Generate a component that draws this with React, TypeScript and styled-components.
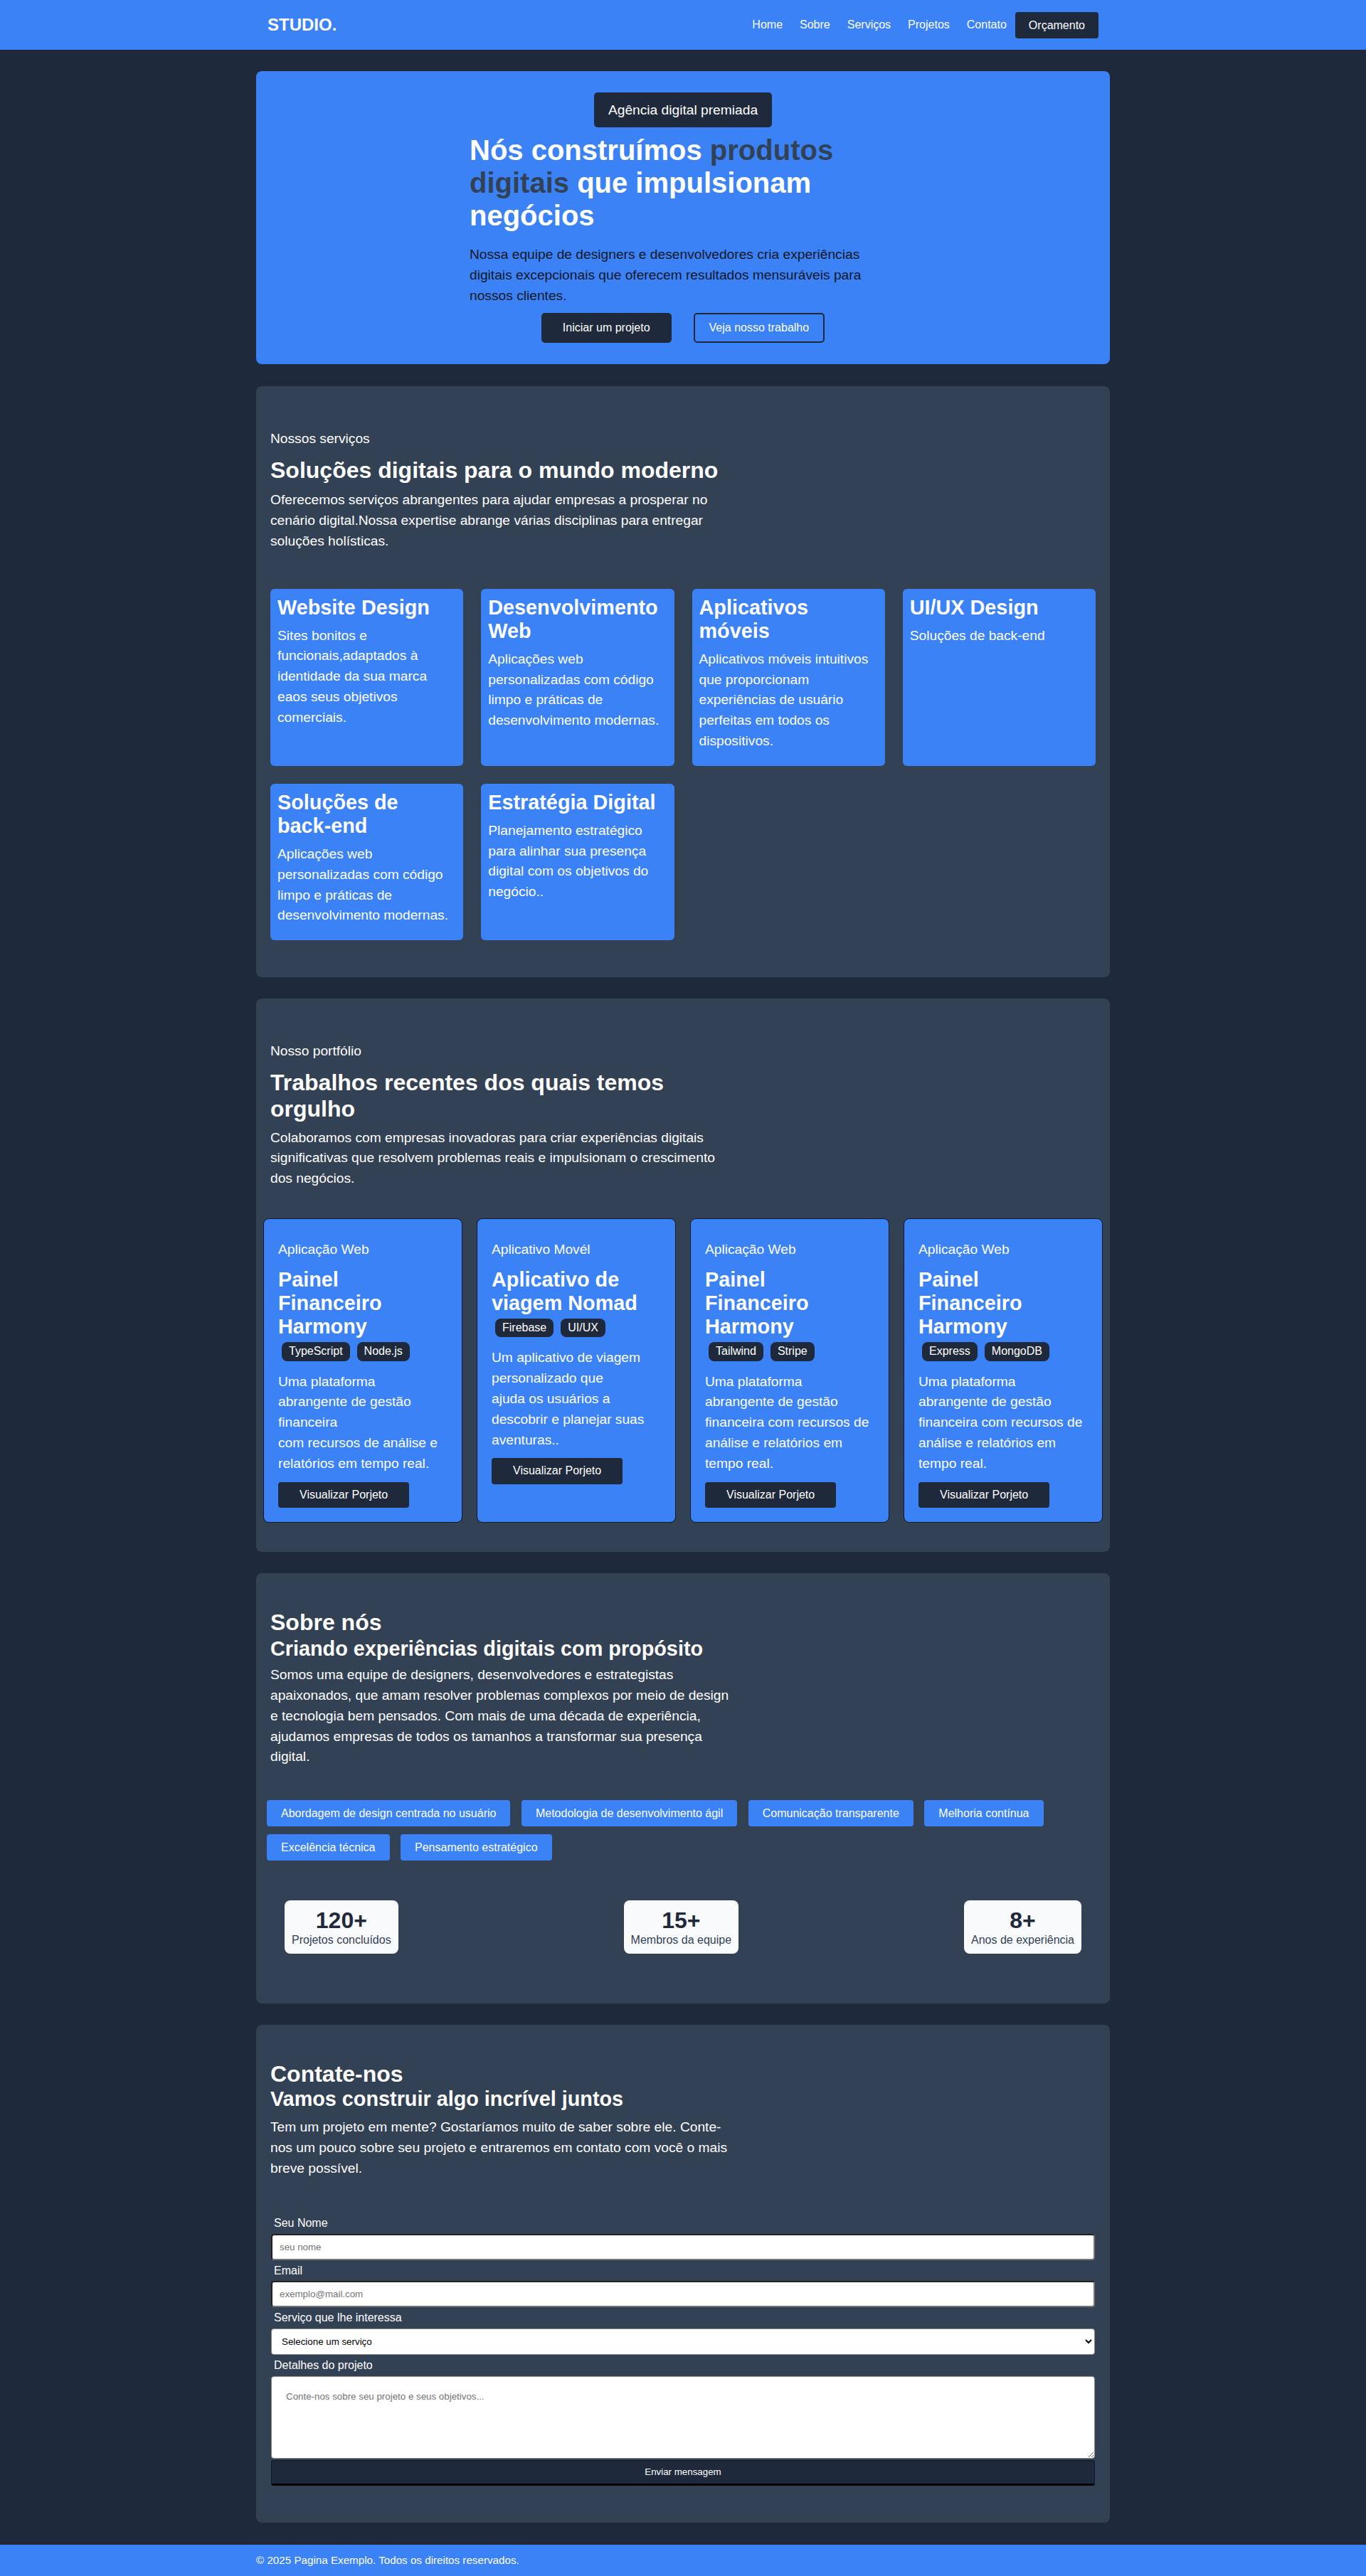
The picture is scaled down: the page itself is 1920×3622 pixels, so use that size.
import React from "react";
import styled, { createGlobalStyle } from "styled-components";

const GlobalStyle = createGlobalStyle`
  * { box-sizing: border-box; }
  html, body { margin: 0; padding: 0; }
  body {
    background: #1e293b;
    color: #ffffff;
    font-family: "Liberation Sans", Arial, Helvetica, sans-serif;
  }
`;

/* ---------- Header ---------- */
const Header = styled.header`
  background: #3b82f6;
  height: 70px;
`;
const HeaderInner = styled.div`
  max-width: 1200px;
  height: 100%;
  margin: 0 auto;
  padding: 0 16px;
  display: flex;
  align-items: center;
  justify-content: space-between;
`;
const Logo = styled.div`
  font-size: 24px;
  font-weight: 700;
  color: #ffffff;
`;
const Nav = styled.nav`
  display: flex;
  align-items: center;
`;
const NavLink = styled.a`
  color: #ffffff;
  text-decoration: none;
  font-size: 16px;
  line-height: 18.4px;
  padding: 8px 12px;
`;
const NavCta = styled.a`
  color: #ffffff;
  background: #1e293b;
  text-decoration: none;
  font-size: 16px;
  line-height: 19px;
  padding: 9px 19px;
  border-radius: 4px;
`;

/* ---------- Layout ---------- */
const Main = styled.main`
  max-width: 1200px;
  margin: 0 auto;
  padding: 30px 0 30.7px;
  display: flex;
  flex-direction: column;
  gap: 30.6px;
`;

/* ---------- Hero ---------- */
const Hero = styled.section`
  background: #3b82f6;
  border-radius: 8px;
  padding: 30px;
  display: flex;
  flex-direction: column;
  align-items: center;
`;
const Badge = styled.div`
  background: #1e293b;
  color: #ffffff;
  font-size: 19.2px;
  line-height: 23px;
  padding: 13px 20px;
  border-radius: 5px;
`;
const HeroContent = styled.div`
  width: 600px;
`;
const HeroTitle = styled.h1`
  font-size: 40px;
  line-height: 46px;
  font-weight: 700;
  color: #ffffff;
  margin: 9px 0 18px;
`;
const Highlight = styled.span`
  color: #334155;
`;
const HeroText = styled.p`
  font-size: 19.2px;
  line-height: 28.8px;
  color: #111827;
  margin: 0;
`;
const HeroActions = styled.div`
  display: flex;
  gap: 31px;
  margin-top: 10px;
`;
const HeroButton = styled.button<{ $outline?: boolean }>`
  font-family: inherit;
  font-size: 16px;
  line-height: 18px;
  color: #ffffff;
  cursor: pointer;
  border-radius: 5px;
  background: ${(p) => (p.$outline ? "transparent" : "#1e293b")};
  border: ${(p) => (p.$outline ? "2px solid #1e293b" : "none")};
  padding: ${(p) => (p.$outline ? "10px 20px" : "12px 30px")};
`;

/* ---------- Generic section ---------- */
const Section = styled.section<{ $pt: number; $pb: number }>`
  background: #334155;
  border-radius: 8px;
  padding: ${(p) => p.$pt}px 20px ${(p) => p.$pb}px;
`;
const Eyebrow = styled.p`
  font-size: 19.2px;
  line-height: 28.8px;
  color: #ffffff;
  margin: 0;
`;
const SectionTitle = styled.h2<{ $mt?: number }>`
  font-size: 32px;
  line-height: 36.8px;
  font-weight: 700;
  color: #ffffff;
  max-width: 650px;
  margin: ${(p) => p.$mt ?? 0}px 0 0;
`;
const SectionSubtitle = styled.h3<{ $mt?: number }>`
  font-size: 28.8px;
  line-height: 33.1px;
  font-weight: 700;
  color: #ffffff;
  margin: ${(p) => p.$mt ?? 0}px 0 0;
`;
const SectionText = styled.p<{ $mt: number }>`
  font-size: 19.2px;
  line-height: 28.8px;
  color: #ffffff;
  max-width: 650px;
  margin: ${(p) => p.$mt}px 0 0;
`;

/* ---------- Services ---------- */
const ServiceGrid = styled.div`
  display: grid;
  grid-template-columns: repeat(4, 1fr);
  gap: 25px;
  margin-top: 52px;
`;
const ServiceCard = styled.div`
  background: #3b82f6;
  border-radius: 6px;
  padding: 10px 10px 20px;
`;
const ServiceTitle = styled.h3`
  font-size: 28.8px;
  line-height: 33.1px;
  font-weight: 700;
  color: #ffffff;
  margin: 0 0 9px;
`;
const ServiceText = styled.p`
  font-size: 19.2px;
  line-height: 28.8px;
  color: #ffffff;
  margin: 0;
`;

/* ---------- Portfolio ---------- */
const ProjectGrid = styled.div`
  display: grid;
  grid-template-columns: repeat(4, 1fr);
  gap: 20px;
  margin: 41px -10px 0;
`;
const ProjectCard = styled.article`
  background: #3b82f6;
  border: 1px solid #0f172a;
  border-radius: 8px;
  padding: 20px;
  display: flex;
  flex-direction: column;
  align-items: flex-start;
`;
const ProjectType = styled.p`
  font-size: 19.2px;
  line-height: 28.8px;
  color: #ffffff;
  margin: 9px 0 0;
`;
const ProjectTitle = styled.h3`
  font-size: 28.8px;
  line-height: 33.1px;
  font-weight: 700;
  color: #ffffff;
  margin: 11px 0 0;
`;
const TagList = styled.div`
  display: flex;
  flex-wrap: wrap;
`;
const Tag = styled.span`
  background: #1e293b;
  color: #ffffff;
  font-size: 16px;
  line-height: 18.4px;
  padding: 4px 10px;
  border-radius: 8px;
  margin: 5px;
`;
const ProjectText = styled.p`
  font-size: 19.2px;
  line-height: 28.8px;
  color: #ffffff;
  margin: 10px 0 0;
`;
const ProjectButton = styled.button`
  font-family: inherit;
  font-size: 16px;
  line-height: 18.4px;
  color: #ffffff;
  background: #1e293b;
  border: none;
  border-radius: 4px;
  padding: 9px 30px;
  margin-top: 11px;
  cursor: pointer;
`;

/* ---------- About ---------- */
const PillList = styled.div`
  display: flex;
  flex-wrap: wrap;
  gap: 11px 15.5px;
  margin: 46px -5px 0;
`;
const Pill = styled.span`
  background: #3b82f6;
  color: #ffffff;
  font-size: 16px;
  line-height: 19px;
  padding: 9px 20px;
  border-radius: 4px;
`;
const StatsRow = styled.div`
  display: flex;
  justify-content: space-between;
  padding: 0 20px;
  margin-top: 56px;
`;
const StatCard = styled.div`
  background: #f8fafc;
  border-radius: 8px;
  padding: 10px;
  text-align: center;
`;
const StatNumber = styled.div`
  font-size: 32px;
  line-height: 36.8px;
  font-weight: 700;
  color: #1e293b;
`;
const StatLabel = styled.div`
  font-size: 16px;
  line-height: 18.4px;
  color: #334155;
`;

/* ---------- Contact ---------- */
const Form = styled.form`
  display: flex;
  flex-direction: column;
  margin: 54px 1px 0;
`;
const FieldLabel = styled.label`
  font-size: 16px;
  line-height: 18.4px;
  color: #ffffff;
  padding-left: 4px;
  margin-bottom: 5px;
`;
const TextInput = styled.input`
  height: 37px;
  padding: 0 10px;
  font-family: inherit;
  font-size: 13.33px;
  color: #000000;
  background: #ffffff;
  border: 2px inset #767676;
  border-radius: 4px;
  margin-bottom: 6px;
`;
const SelectInput = styled.select`
  height: 37.6px;
  padding: 0 10px;
  font-family: inherit;
  font-size: 13.33px;
  color: #000000;
  background: #ffffff;
  border: 1px solid #8a8a8a;
  border-radius: 4px;
  margin-bottom: 6px;
`;
const TextArea = styled.textarea`
  height: 116px;
  padding: 20px;
  font-family: inherit;
  font-size: 13.33px;
  color: #000000;
  background: #ffffff;
  border: 1px solid #8a8a8a;
  border-radius: 4px;
  resize: vertical;
  margin-bottom: 2px;
`;
const SubmitButton = styled.button`
  height: 36.4px;
  font-family: inherit;
  font-size: 13.33px;
  color: #ffffff;
  background: #1e293b;
  border: 1px solid #0f172a;
  border-bottom: 3px solid #000000;
  border-radius: 3px;
  cursor: pointer;
`;

/* ---------- Footer ---------- */
const Footer = styled.footer`
  background: #3b82f6;
  height: 44px;
`;
const FooterInner = styled.div`
  max-width: 1200px;
  height: 100%;
  margin: 0 auto;
  display: flex;
  align-items: center;
  font-size: 15.2px;
  color: #ffffff;
`;

/* ---------- Data ---------- */
const services = [
  {
    title: "Website Design",
    text: "Sites bonitos e funcionais,adaptados à identidade da sua marca eaos seus objetivos comerciais.",
  },
  {
    title: "Desenvolvimento Web",
    text: "Aplicações web personalizadas com código limpo e práticas de desenvolvimento modernas.",
  },
  {
    title: "Aplicativos móveis",
    text: "Aplicativos móveis intuitivos que proporcionam experiências de usuário perfeitas em todos os dispositivos.",
  },
  { title: "UI/UX Design", text: "Soluções de back-end" },
  {
    title: "Soluções de back-end",
    text: "Aplicações web personalizadas com código limpo e práticas de desenvolvimento modernas.",
  },
  {
    title: "Estratégia Digital",
    text: "Planejamento estratégico para alinhar sua presença digital com os objetivos do negócio..",
  },
];

const projects: {
  type: string;
  title: string;
  tags: string[];
  text: React.ReactNode;
}[] = [
  {
    type: "Aplicação Web",
    title: "Painel Financeiro Harmony",
    tags: ["TypeScript", "Node.js"],
    text: (
      <>
        Uma plataforma abrangente de gestão financeira
        <br />
        com recursos de análise e relatórios em tempo real.
      </>
    ),
  },
  {
    type: "Aplicativo Movél",
    title: "Aplicativo de viagem Nomad",
    tags: ["Firebase", "UI/UX"],
    text: (
      <>
        Um aplicativo de viagem personalizado que
        <br />
        ajuda os usuários a descobrir e planejar suas aventuras..
      </>
    ),
  },
  {
    type: "Aplicação Web",
    title: "Painel Financeiro Harmony",
    tags: ["Tailwind", "Stripe"],
    text: "Uma plataforma abrangente de gestão financeira com recursos de análise e relatórios em tempo real.",
  },
  {
    type: "Aplicação Web",
    title: "Painel Financeiro Harmony",
    tags: ["Express", "MongoDB"],
    text: "Uma plataforma abrangente de gestão financeira com recursos de análise e relatórios em tempo real.",
  },
];

const values = [
  "Abordagem de design centrada no usuário",
  "Metodologia de desenvolvimento ágil",
  "Comunicação transparente",
  "Melhoria contínua",
  "Excelência técnica",
  "Pensamento estratégico",
];

const stats = [
  { value: "120+", label: "Projetos concluídos" },
  { value: "15+", label: "Membros da equipe" },
  { value: "8+", label: "Anos de experiência" },
];

export default function App() {
  return (
    <>
      <GlobalStyle />
      <Header>
        <HeaderInner>
          <Logo>STUDIO.</Logo>
          <Nav>
            <NavLink href="#">Home</NavLink>
            <NavLink href="#">Sobre</NavLink>
            <NavLink href="#">Serviços</NavLink>
            <NavLink href="#">Projetos</NavLink>
            <NavLink href="#">Contato</NavLink>
            <NavCta href="#">Orçamento</NavCta>
          </Nav>
        </HeaderInner>
      </Header>

      <Main>
        <Hero>
          <Badge>Agência digital premiada</Badge>
          <HeroContent>
            <HeroTitle>
              Nós construímos <Highlight>produtos</Highlight>{" "}
              <Highlight>digitais</Highlight> que impulsionam negócios
            </HeroTitle>
            <HeroText>
              Nossa equipe de designers e desenvolvedores cria experiências
              digitais excepcionais que oferecem resultados mensuráveis para
              nossos clientes.
            </HeroText>
          </HeroContent>
          <HeroActions>
            <HeroButton>Iniciar um projeto</HeroButton>
            <HeroButton $outline>Veja nosso trabalho</HeroButton>
          </HeroActions>
        </Hero>

        <Section $pt={60.4} $pb={51.6}>
          <Eyebrow>Nossos serviços</Eyebrow>
          <SectionTitle $mt={11}>Soluções digitais para o mundo moderno</SectionTitle>
          <SectionText $mt={9.2}>
            Oferecemos serviços abrangentes para ajudar empresas a prosperar no
            cenário digital.Nossa expertise abrange várias disciplinas para
            entregar soluções holísticas.
          </SectionText>
          <ServiceGrid>
            {services.map((s, i) => (
              <ServiceCard key={i}>
                <ServiceTitle>{s.title}</ServiceTitle>
                <ServiceText>{s.text}</ServiceText>
              </ServiceCard>
            ))}
          </ServiceGrid>
        </Section>

        <Section $pt={60} $pb={40.7}>
          <Eyebrow>Nosso portfólio</Eyebrow>
          <SectionTitle $mt={11}>Trabalhos recentes dos quais temos orgulho</SectionTitle>
          <SectionText $mt={8}>
            Colaboramos com empresas inovadoras para criar experiências digitais
            significativas que resolvem problemas reais e impulsionam o
            crescimento dos negócios.
          </SectionText>
          <ProjectGrid>
            {projects.map((p, i) => (
              <ProjectCard key={i}>
                <ProjectType>{p.type}</ProjectType>
                <ProjectTitle>{p.title}</ProjectTitle>
                <TagList>
                  {p.tags.map((t) => (
                    <Tag key={t}>{t}</Tag>
                  ))}
                </TagList>
                <ProjectText>{p.text}</ProjectText>
                <ProjectButton>Visualizar Porjeto</ProjectButton>
              </ProjectCard>
            ))}
          </ProjectGrid>
        </Section>

        <Section $pt={51} $pb={69.3}>
          <SectionTitle>Sobre nós</SectionTitle>
          <SectionSubtitle $mt={2}>Criando experiências digitais com propósito</SectionSubtitle>
          <SectionText $mt={6}>
            Somos uma equipe de designers, desenvolvedores e estrategistas
            apaixonados, que amam resolver problemas complexos por meio de design
            e tecnologia bem pensados. Com mais de uma década de experiência,
            ajudamos empresas de todos os tamanhos a transformar sua presença
            digital.
          </SectionText>
          <PillList>
            {values.map((v) => (
              <Pill key={v}>{v}</Pill>
            ))}
          </PillList>
          <StatsRow>
            {stats.map((s) => (
              <StatCard key={s.label}>
                <StatNumber>{s.value}</StatNumber>
                <StatLabel>{s.label}</StatLabel>
              </StatCard>
            ))}
          </StatsRow>
        </Section>

        <Section $pt={51} $pb={52}>
          <SectionTitle>Contate-nos</SectionTitle>
          <SectionSubtitle>Vamos construir algo incrível juntos</SectionSubtitle>
          <SectionText $mt={9}>
            Tem um projeto em mente? Gostaríamos muito de saber sobre ele.
            Conte-nos um pouco sobre seu projeto e entraremos em contato com você
            o mais breve possível.
          </SectionText>
          <Form onSubmit={(e) => e.preventDefault()}>
            <FieldLabel htmlFor="nome">Seu Nome</FieldLabel>
            <TextInput id="nome" type="text" placeholder="seu nome" />
            <FieldLabel htmlFor="email">Email</FieldLabel>
            <TextInput id="email" type="email" placeholder="exemplo@mail.com" />
            <FieldLabel htmlFor="servico">Serviço que lhe interessa</FieldLabel>
            <SelectInput id="servico" defaultValue="">
              <option value="">Selecione um serviço</option>
              <option value="web">Website Design</option>
              <option value="dev">Desenvolvimento Web</option>
              <option value="app">Aplicativos móveis</option>
            </SelectInput>
            <FieldLabel htmlFor="detalhes">Detalhes do projeto</FieldLabel>
            <TextArea
              id="detalhes"
              placeholder="Conte-nos sobre seu projeto e seus objetivos..."
            />
            <SubmitButton type="submit">Enviar mensagem</SubmitButton>
          </Form>
        </Section>
      </Main>

      <Footer>
        <FooterInner>© 2025 Pagina Exemplo. Todos os direitos reservados.</FooterInner>
      </Footer>
    </>
  );
}
